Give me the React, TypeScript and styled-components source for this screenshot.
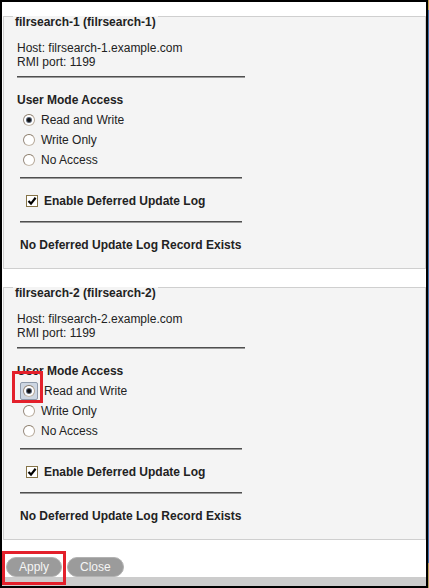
import React from "react";
import styled, { createGlobalStyle } from "styled-components";

const Global = createGlobalStyle`
  html, body { margin: 0; padding: 0; }
  body {
    font-family: "Liberation Sans", Arial, sans-serif;
    background: linear-gradient(to bottom, #c9a44c 0, #c9a44c 10px, #3a6da7 10px, #3a6da7 563px, #b89f5e 563px);
    min-height: 588px;
  }
`;

const Dialog = styled.div`
  position: relative;
  box-sizing: border-box;
  width: 428px;
  height: 588px;
  border: 2px solid #000;
  background: #fff;
  display: flex;
  flex-direction: column;
  color: #222;
  font-size: 12px;
  line-height: 14px;
`;

const Group = styled.fieldset<{ $first?: boolean }>`
  margin: ${(p) => (p.$first ? "1px" : "5px")} 0 0 1px;
  padding: 0;
  border: 1px solid #cfcfcf;
  background: #f4f4f4;
  min-width: 0;
`;

const Legend = styled.legend`
  margin-left: 9px;
  padding: 12px 2px 0;
  font-weight: bold;
  font-size: 12px;
  line-height: 14px;
  color: #222;
`;

const GroupBody = styled.div`
  padding: 0 0 16px 13px;
  display: flex;
  flex-direction: column;
  align-items: flex-start;
`;

const Info = styled.div`
  margin-top: 12px;
`;

const Rule = styled.div<{ $inset?: boolean; $gap: number }>`
  box-sizing: border-box;
  margin-top: ${(p) => p.$gap}px;
  margin-left: ${(p) => (p.$inset ? 3 : 0)}px;
  width: ${(p) => (p.$inset ? 222 : 228)}px;
  height: 2px;
  border-top: 1px solid #4f4f4f;
  border-bottom: 1px solid #9a9a9a;
`;

const Title = styled.div`
  margin-top: 15px;
  font-weight: bold;
`;

const RadioList = styled.div`
  margin-top: 3px;
  display: flex;
  flex-direction: column;
`;

const RadioRow = styled.label`
  display: flex;
  align-items: center;
  height: 20px;
  padding-left: 6px;
`;

const FocusRing = styled.span`
  box-sizing: border-box;
  margin-left: -3px;
  width: 18px;
  height: 18px;
  display: flex;
  align-items: center;
  justify-content: center;
  border: 1px solid #8f9bab;
  background: #cdd6e2;
  border-radius: 2px;
`;

const RadioDot = styled.span<{ $on?: boolean }>`
  box-sizing: border-box;
  width: 12px;
  height: 12px;
  border-radius: 50%;
  border: 1px solid;
  border-color: #8a7b69 #b3a696 #c4b9ab #94877a;
  background: #fff;
  display: flex;
  align-items: center;
  justify-content: center;
  flex: none;
  &::after {
    content: "";
    display: ${(p) => (p.$on ? "block" : "none")};
    width: 4px;
    height: 4px;
    border-radius: 50%;
    background: #111;
    box-shadow: 0 0 0 1px #566276;
  }
`;

const RadioText = styled.span`
  margin-left: 6px;
`;

const CheckRow = styled.label`
  margin-top: 12px;
  display: flex;
  align-items: center;
  height: 20px;
  padding-left: 9px;
  font-weight: bold;
`;

const CheckBox = styled.span`
  box-sizing: border-box;
  width: 12px;
  height: 12px;
  border: 1px solid #857347;
  background: #fff;
  display: flex;
  align-items: center;
  justify-content: center;
  flex: none;
`;

const CheckText = styled.span`
  margin-left: 6px;
`;

const Note = styled.div`
  margin-top: 15px;
  padding-left: 3px;
  font-weight: bold;
`;

const Buttons = styled.div`
  margin-top: 17px;
  padding-left: 4px;
  display: flex;
  gap: 5px;
`;

const Button = styled.button`
  box-sizing: border-box;
  height: 20px;
  padding: 0 12px;
  border-radius: 10px;
  border: 1px solid #b2b2b2;
  background: #9b9b9b;
  color: #f5f5f5;
  font-family: "Liberation Sans", Arial, sans-serif;
  font-size: 12px;
  line-height: 18px;
`;

const Footer = styled.div`
  margin-top: auto;
  height: 9px;
  background: #cccccc;
`;

const Highlight = styled.div<{ $x: number; $y: number; $w: number; $h: number }>`
  position: absolute;
  box-sizing: border-box;
  left: ${(p) => p.$x}px;
  top: ${(p) => p.$y}px;
  width: ${(p) => p.$w}px;
  height: ${(p) => p.$h}px;
  border: 3px solid #e3202b;
  pointer-events: none;
`;

const Check = () => (
  <svg width="10" height="10" viewBox="0 0 10 10">
    <path d="M1.5 5 L4 7.6 L8.6 1.8" fill="none" stroke="#000" strokeWidth="2.2" />
  </svg>
);

type Server = { name: string; host: string; port: number; focused?: boolean };

const servers: Server[] = [
  { name: "filrsearch-1", host: "filrsearch-1.example.com", port: 1199 },
  { name: "filrsearch-2", host: "filrsearch-2.example.com", port: 1199, focused: true },
];

const options = ["Read and Write", "Write Only", "No Access"];

export default function App() {
  return (
    <>
      <Global />
      <Dialog>
        {servers.map((s, i) => (
          <Group key={s.name} $first={i === 0}>
            <Legend>
              {s.name} ({s.name})
            </Legend>
            <GroupBody>
              <Info>
                Host: {s.host}
                <br />
                RMI port: {s.port}
              </Info>
              <Rule $gap={7} />
              <Title>User Mode Access</Title>
              <RadioList>
                {options.map((o, j) => (
                  <RadioRow key={o}>
                    {j === 0 && s.focused ? (
                      <FocusRing>
                        <RadioDot $on />
                      </FocusRing>
                    ) : (
                      <RadioDot $on={j === 0} />
                    )}
                    <RadioText>{o}</RadioText>
                  </RadioRow>
                ))}
              </RadioList>
              <Rule $inset $gap={7} />
              <CheckRow>
                <CheckBox>
                  <Check />
                </CheckBox>
                <CheckText>Enable Deferred Update Log</CheckText>
              </CheckRow>
              <Rule $inset $gap={10} />
              <Note>No Deferred Update Log Record Exists</Note>
            </GroupBody>
          </Group>
        ))}
        <Buttons>
          <Button>Apply</Button>
          <Button>Close</Button>
        </Buttons>
        <Footer />
        <Highlight $x={10} $y={369} $w={31} $h={32} />
        <Highlight $x={0} $y={549} $w={64} $h={34} />
      </Dialog>
    </>
  );
}
